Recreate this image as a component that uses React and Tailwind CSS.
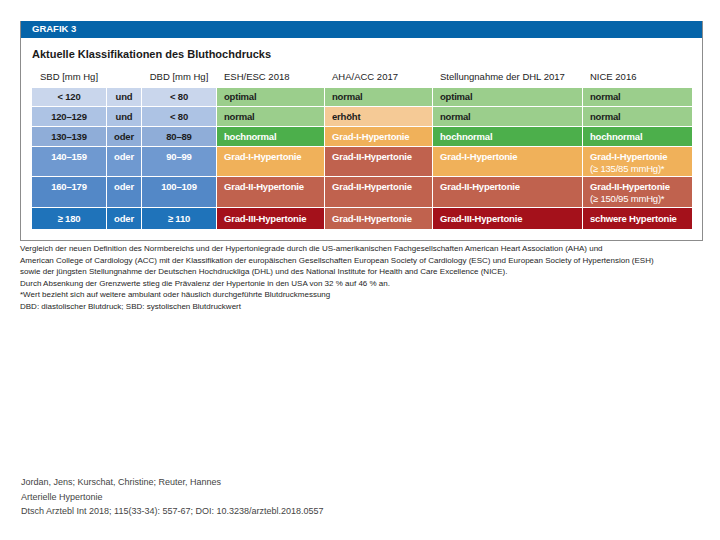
import React from 'react';

const LG = 'bg-[#9bce8c] text-[#1c1c1c]';
const GR = 'bg-[#4caf4b] text-white';
const LO = 'bg-[#f5ca96] text-[#1c1c1c]';
const OR = 'bg-[#f0b15a] text-white';
const RD = 'bg-[#c0624e] text-white';
const DR = 'bg-[#a4111b] text-white';

const rows = [
  { sbd: '< 120', op: 'und', dbd: '< 80', blue: 'bg-[#c9d6ec] text-[#1c1c1c]', align: 'items-center',
    cells: [['optimal', LG], ['normal', LG], ['optimal', LG], ['normal', LG]] },
  { sbd: '120–129', op: 'und', dbd: '< 80', blue: 'bg-[#adc3e4] text-[#1c1c1c]', align: 'items-center',
    cells: [['normal', LG], ['erhöht', LO], ['normal', LG], ['normal', LG]] },
  { sbd: '130–139', op: 'oder', dbd: '80–89', blue: 'bg-[#8fadd8] text-[#1c1c1c]', align: 'items-center',
    cells: [['hochnormal', GR], ['Grad-I-Hypertonie', OR], ['hochnormal', GR], ['hochnormal', GR]] },
  { sbd: '140–159', op: 'oder', dbd: '90–99', blue: 'bg-[#6f99d0] text-white', align: 'items-start pt-[4px]',
    cells: [['Grad-I-Hypertonie', OR], ['Grad-II-Hypertonie', RD], ['Grad-I-Hypertonie', OR], [['Grad-I-Hypertonie', '(≥ 135/85 mmHg)*'], OR]] },
  { sbd: '160–179', op: 'oder', dbd: '100–109', blue: 'bg-[#5388c7] text-white', align: 'items-start pt-[4px]',
    cells: [['Grad-II-Hypertonie', RD], ['Grad-II-Hypertonie', RD], ['Grad-II-Hypertonie', RD], [['Grad-II-Hypertonie', '(≥ 150/95 mmHg)*'], RD]] },
  { sbd: '≥ 180', op: 'oder', dbd: '≥ 110', blue: 'bg-[#1f73ba] text-white', align: 'items-center',
    cells: [['Grad-III-Hypertonie', DR], ['Grad-II-Hypertonie', RD], ['Grad-III-Hypertonie', DR], ['schwere Hypertonie', DR]] },
];

const notes = [
  'Vergleich der neuen Definition des Normbereichs und der Hypertoniegrade durch die US-amerikanischen Fachgesellschaften American Heart Association (AHA) und',
  'American College of Cardiology (ACC) mit der Klassifikation der europäischen Gesellschaften European Society of Cardiology (ESC) und European Society of Hypertension (ESH)',
  'sowie der jüngsten Stellungnahme der Deutschen Hochdruckliga (DHL) und des National Institute for Health and Care Excellence (NICE).',
  'Durch Absenkung der Grenzwerte stieg die Prävalenz der Hypertonie in den USA von 32 % auf 46 % an.',
  '*Wert bezieht sich auf weitere ambulant oder häuslich durchgeführte Blutdruckmessung',
  'DBD: diastolischer Blutdruck; SBD: systolischen Blutdruckwert',
];

const cols = 'grid grid-cols-[74px_34px_74px_107px_107px_149px_109px] gap-x-px';

export default function App() {
  return (
    <div className="w-[720px] h-[540px] bg-white font-['Liberation_Sans',Arial,sans-serif] relative">
      <div className="pt-[21px] pl-[20px]">
        <div className="w-[683px] border border-[#8c8c8c] border-t-0">
          <div className="h-[17px] bg-[#0564a9] text-white text-[9.5px] font-bold flex items-center pl-[11px]">GRAFIK 3</div>
          <div className="pt-[9px] pb-[11px] pl-[11px]">
            <h1 className="text-[11px] leading-[14px] font-bold text-[#1a1a1a]">Aktuelle Klassifikationen des Bluthochdrucks</h1>
            <div className={`${cols} mt-[10px] h-[17px] text-[9.5px] leading-[12px] text-[#1c1c1c]`}>
              <div className="text-center">SBD [mm Hg]</div>
              <div />
              <div className="text-center">DBD [mm Hg]</div>
              <div className="pl-[7px]">ESH/ESC 2018</div>
              <div className="pl-[7px]">AHA/ACC 2017</div>
              <div className="pl-[7px]">Stellungnahme der DHL 2017</div>
              <div className="pl-[7px]">NICE 2016</div>
            </div>
            <div className={`${cols} gap-y-px grid-rows-[18px_19px_19px_29px_30px_21px] w-[660px] bg-white text-[9.5px] leading-[12px] font-bold tracking-[-0.2px]`}>
              {rows.map((r, i) => (
                <React.Fragment key={i}>
                  <div className={`flex justify-center ${r.align} ${r.blue}`}>{r.sbd}</div>
                  <div className={`flex justify-center ${r.align} ${r.blue}`}>{r.op}</div>
                  <div className={`flex justify-center ${r.align} ${r.blue}`}>{r.dbd}</div>
                  {r.cells.map(([txt, cls], j) => (
                    <div key={j} className={`flex pl-[7px] ${r.align} ${cls}`}>
                      {Array.isArray(txt) ? (
                        <div>
                          <div>{txt[0]}</div>
                          <div className="font-normal">{txt[1]}</div>
                        </div>
                      ) : txt}
                    </div>
                  ))}
                </React.Fragment>
              ))}
            </div>
          </div>
        </div>
        <div className="pt-[2px] text-[8px] leading-[11.5px] text-[#262626]">
          {notes.map((n, i) => (
            <div key={i} className="whitespace-nowrap">{n}</div>
          ))}
        </div>
      </div>

      <div className="absolute left-[21px] top-[475px] text-[9px] leading-[14.5px] text-[#444]">
        <div>Jordan, Jens; Kurschat, Christine; Reuter, Hannes</div>
        <div>Arterielle Hypertonie</div>
        <div>Dtsch Arztebl Int 2018; 115(33-34): 557-67; DOI: 10.3238/arztebl.2018.0557</div>
      </div>
    </div>
  );
}
